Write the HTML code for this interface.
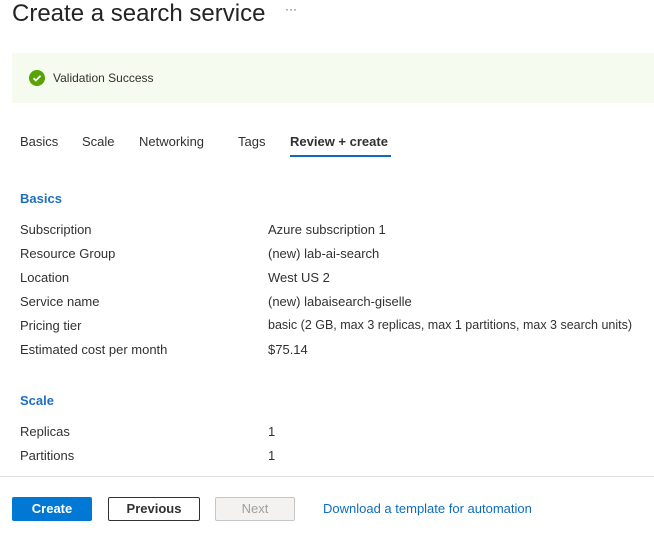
<!DOCTYPE html>
<html><head><style>
body{margin:0;width:654px;height:533px;background:#fff;font-family:"Liberation Sans",sans-serif;color:#323130;position:relative;overflow:hidden}
.a{position:absolute;white-space:nowrap}
.t{font-size:13px}
.h{font-size:13px;color:#0f6cbd;font-weight:bold;color:#1f6fbf}
</style></head><body>
<div class="a" style="left:12px;top:0;font-size:24px;color:#242424;line-height:28px">Create a search service</div>
<div class="a" style="left:285px;top:2px;font-size:12px;color:#605e5c">···</div>
<div class="a" style="left:12px;top:53px;width:642px;height:50px;background:#f5fbef"></div>
<svg class="a" style="left:29px;top:70px" width="16" height="16"><circle cx="8" cy="8" r="8" fill="#57a300"/><path d="M4.5 8.2l2.3 2.3 4.7-4.7" stroke="#fff" stroke-width="1.8" fill="none"/></svg>
<div class="a" style="left:53px;top:71px;font-size:12px">Validation Success</div>
<div class="a t" style="left:20px;top:134px">Basics</div>
<div class="a t" style="left:82px;top:134px">Scale</div>
<div class="a t" style="left:139px;top:134px">Networking</div>
<div class="a t" style="left:238px;top:134px">Tags</div>
<div class="a t" style="left:290px;top:134px;font-weight:bold;font-weight:600">Review + create</div>
<div class="a" style="left:290px;top:155px;width:101px;height:2px;background:#0f6cbd"></div>
<div class="a h" style="left:20px;top:191px">Basics</div>
<div class="a t" style="left:20px;top:222px">Subscription</div><div class="a t" style="left:268px;top:222px">Azure subscription 1</div>
<div class="a t" style="left:20px;top:246px">Resource Group</div><div class="a t" style="left:268px;top:246px">(new) lab-ai-search</div>
<div class="a t" style="left:20px;top:270px">Location</div><div class="a t" style="left:268px;top:270px">West US 2</div>
<div class="a t" style="left:20px;top:294px">Service name</div><div class="a t" style="left:268px;top:294px">(new) labaisearch-giselle</div>
<div class="a t" style="left:20px;top:318px">Pricing tier</div><div class="a t" style="left:268px;top:318px;font-size:12.5px">basic (2 GB, max 3 replicas, max 1 partitions, max 3 search units)</div>
<div class="a t" style="left:20px;top:342px">Estimated cost per month</div><div class="a t" style="left:268px;top:342px">$75.14</div>
<div class="a h" style="left:20px;top:393px">Scale</div>
<div class="a t" style="left:20px;top:424px">Replicas</div><div class="a t" style="left:268px;top:424px">1</div>
<div class="a t" style="left:20px;top:448px">Partitions</div><div class="a t" style="left:268px;top:448px">1</div>
<div class="a" style="left:0;top:476px;width:654px;height:1px;background:#e1dfdd"></div>
<div class="a" style="left:12px;top:497px;width:80px;height:24px;background:#0078d4;border-radius:2px;color:#fff;font-size:13px;font-weight:bold;text-align:center;line-height:24px">Create</div>
<div class="a" style="left:108px;top:497px;width:90px;height:22px;border:1px solid #323130;border-radius:2px;font-size:13px;text-align:center;line-height:22px;font-weight:600">Previous</div>
<div class="a" style="left:215px;top:497px;width:78px;height:22px;border:1px solid #c8c6c4;background:#f3f2f1;border-radius:2px;font-size:13px;text-align:center;line-height:22px;color:#a19f9d">Next</div>
<div class="a t" style="left:323px;top:501px;color:#0f6cbd">Download a template for automation</div>
</body></html>
